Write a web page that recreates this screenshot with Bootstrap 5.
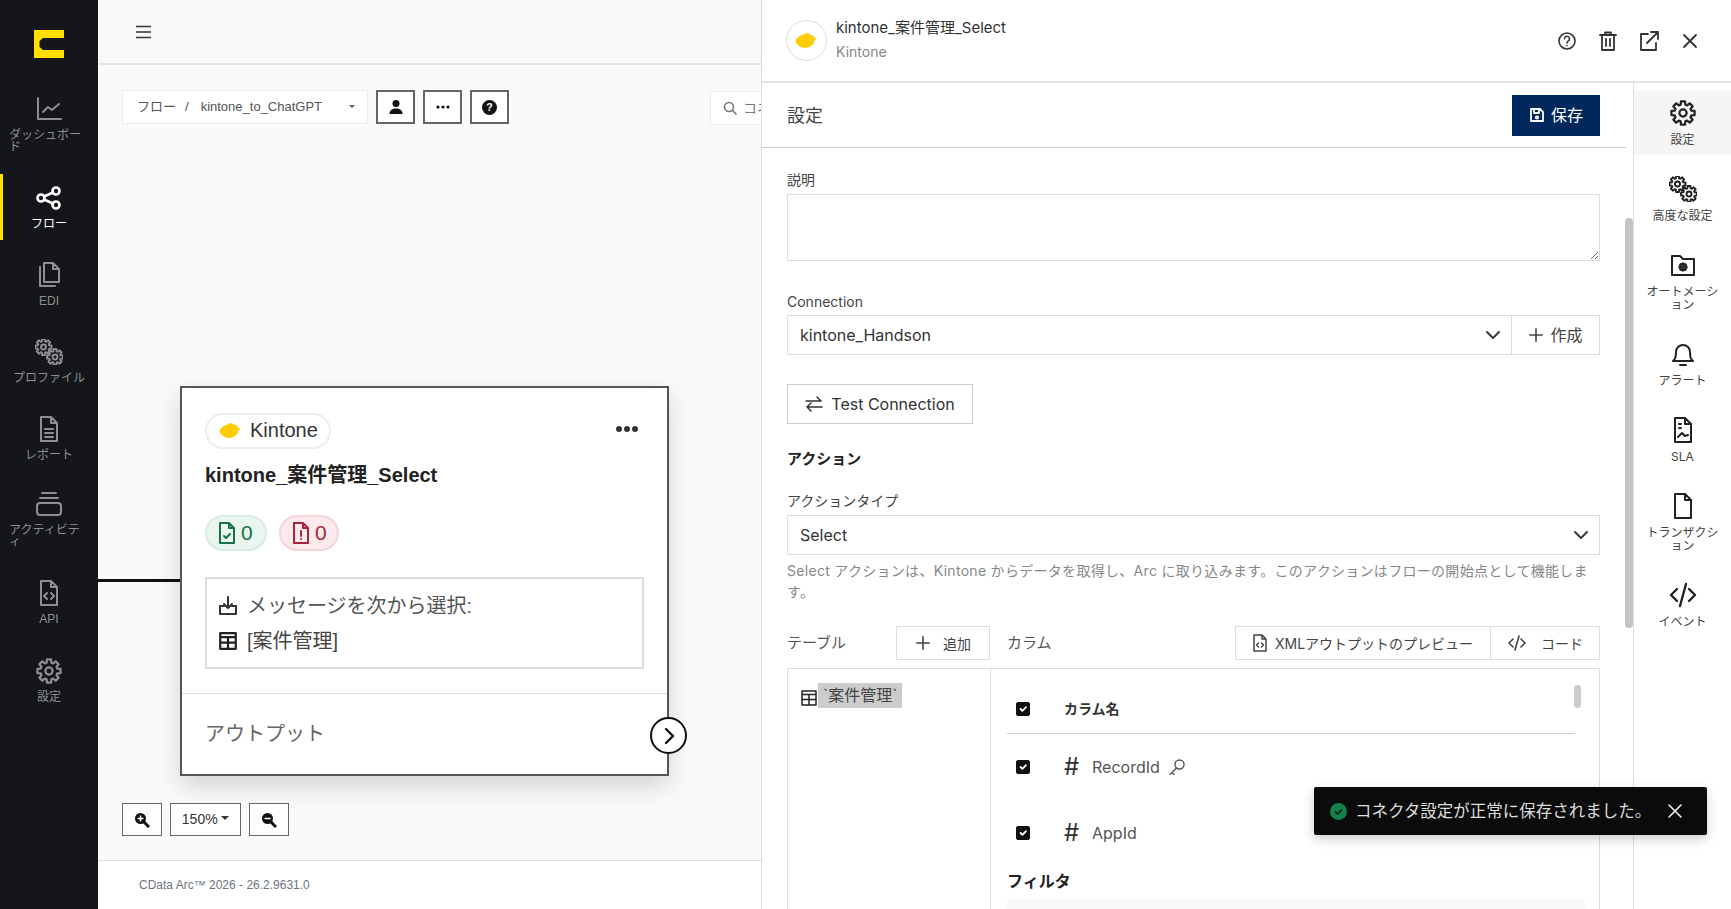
<!DOCTYPE html>
<html lang="ja">
  <head>
    <meta charset="UTF-8" />
    <meta name="viewport" content="width=device-width, initial-scale=1.0" />
    <title>CData Arc - kintone_to_ChatGPT</title>
    <link href="https://cdn.jsdelivr.net/npm/bootstrap@5.3.0/dist/css/bootstrap.min.css" rel="stylesheet" />
    <style>
      html, body { height: 100%; overflow: hidden; }
      body { font-family: "Liberation Sans", "Noto Sans CJK JP", sans-serif; color: #333; background: #fff; }
      .ic { fill: none; stroke: currentColor; stroke-width: 2; stroke-linecap: round; stroke-linejoin: round; }

      /* left rail */
      .rail { width: 98px; background: #14161a; color: #8d8f92; }
      .rail-logo { padding: 30px 0 26px 34px; height: 85px; }
      .rail-item { position: relative; min-height: 66px; padding: 11px 9px 10px; margin-bottom: 11px; font-size: 12px; line-height: 12px; }
      .rail-item svg { width: 28px; height: 26px; margin-bottom: 7px; }
      .rail-item.is-active { color: #fff; }
      .rail-item.is-active::before { content: ""; position: absolute; left: 0; top: 0; bottom: 0; width: 3px; background: #ffe000; }

      /* flow page */
      .topbar { height: 65px; background: #f8f8f7; border-bottom: 2px solid #e4e4e4; padding-left: 38px; }
      .flow-canvas { background: #fafafa; }
      .toolbar { position: absolute; left: 24px; top: 25px; }
      .crumb { width: 246px; height: 34px; background: #fff; border: 1px solid #ececec; font-size: 13px; color: #555; padding: 0 12px 0 14px; }
      .crumb-sep { margin: 0 12px 0 9px; }
      .tool-btn { width: 39px; height: 34px; background: #fff; border: 2px solid #666; border-radius: 0; padding: 0; font-size: 13px; color: #111; }
      .search-box { position: absolute; left: 612px; top: 26px; width: 52px; height: 34px; background: #fff; border: 1px solid #ececec; border-right: 0; font-size: 14px; color: #777; padding-left: 12px; overflow: hidden; white-space: nowrap; }
      .flow-edge { position: absolute; left: 0; top: 514px; width: 84px; height: 3px; background: #111; }
      .node-box { position: absolute; left: 82px; top: 321px; width: 489px; height: 390px; background: #fff; border: 2px solid #555; box-shadow: 0 10px 24px rgba(0, 0, 0, .16); }
      .kin-pill { left: 23px; top: 25px; height: 36px; width: 126px; border: 2px solid #eee; border-radius: 18px; font-size: 20px; color: #333; padding: 0 0 2px 12px; }
      .node-title { font-size: 20px; font-weight: 700; line-height: 24px; color: #222; margin: 0; }
      .count-pill { height: 36px; border-radius: 18px; font-size: 21px; padding: 0 10px 0 11px; gap: 5px; }
      .count-ok { width: 62px; background: #e9f6ef; border: 2px solid #d9ece2; color: #177245; }
      .count-bad { width: 60px; background: #fbe9ec; border: 2px solid #f2d5da; color: #a8243a; }
      .msg-box { border: 2px solid #ddd; height: 92px; font-size: 20px; color: #555; padding: 9px 11px; }
      .msg-box > div { height: 35px; gap: 9px; }
      .node-sep { border-top: 1px solid #ddd; }
      .node-out { font-size: 20px; color: #666; padding-left: 23px; }
      .out-arrow { position: absolute; right: -20px; top: 329px; width: 37px; height: 37px; border: 2px solid #111; border-radius: 50%; background: #fff; }
      .zoom-row { position: absolute; left: 24px; top: 738px; gap: 8px; }
      .zoom-btn { width: 40px; height: 33px; background: #fff; border: 1px solid #666; border-radius: 0; padding: 0; font-size: 14px; color: #333; }
      .zoom-pct { width: 71px; }
      .page-foot { height: 49px; background: #fff; border-top: 1px solid #ddd; font-size: 12px; color: #6c757d; padding-left: 41px; }

      /* settings drawer */
      .drawer { position: absolute; top: 0; right: 0; bottom: 0; width: 970px; background: #fff; border-left: 1px solid #ddd; font-family: Inter, "Noto Sans CJK JP", sans-serif; color: #333; }
      .drawer-head { height: 83px; border-bottom: 2px solid #e4e4e4; padding: 0 30px 0 24px; }
      .drawer-logo { width: 41px; height: 41px; border: 1px solid #ddd; border-radius: 50%; margin-right: 9px; }
      .drawer-name { font-size: 15px; line-height: 20px; color: #333; }
      .drawer-sub { font-size: 14px; line-height: 20px; color: #888; margin-top: 4px; }
      .head-icons { gap: 19px; color: #333; }
      .head-icons svg { width: 22px; height: 22px; }
      .drawer-main { position: relative; flex: 1 1 auto; min-width: 0; overflow: hidden; border-right: 1px solid #ddd; }
      .thumb-outer { position: absolute; right: 0; top: 135px; width: 8px; height: 410px; background: #c4c4c4; border-radius: 4px; }
      .set-head { width: 864px; height: 65px; border-bottom: 1px solid #ccc; padding: 0 26px 0 25px; }
      .set-title { font-size: 18px; color: #444; }
      .save-btn { width: 88px; height: 41px; background: #00285c; color: #fff; border: 1px solid #00285c; border-radius: 0; font-size: 16px; padding: 0; gap: 6px; }
      .form-zone { width: 813px; margin-left: 25px; padding-top: 22px; }
      .fld-label { display: block; font-size: 14px; line-height: 20px; color: #444; }
      .form-zone .form-control, .form-zone .form-select { border-radius: 0; border-color: #ddd; color: #333; font-size: 16px; height: 40px; padding-left: 12px; box-shadow: none; }
      .form-zone .form-select { background-position: right 8px center; background-size: 20px 16px; }
      .form-zone textarea.form-control { height: 67px; }
      .make-btn { width: 89px; border: 1px solid #ddd; border-radius: 0; background: #fff; font-size: 16px; color: #444; padding: 0; gap: 6px; }
      .test-btn { width: 186px; height: 40px; border: 1px solid #ccc; border-radius: 0; background: #fff; color: #333; font-size: 16px; padding: 0; gap: 8px; }
      .sect-title { font-size: 15px; font-weight: 700; line-height: 20px; color: #222; }
      .help-line { font-size: 14px; line-height: 21px; letter-spacing: .3px; color: #888; }
      .plain-btn { height: 34px; border: 1px solid #ddd; border-radius: 0; background: #fff; font-size: 14px; color: #444; padding: 0; }
      .tbl-label { font-size: 15px; color: #555; }
      .pick-box { height: 300px; border: 1px solid #ddd; }
      .pick-left { width: 203px; border-right: 1px solid #ddd; padding: 14px 0 0 12px; font-size: 16px; }
      .tbl-tag { background: #ccc; color: #444; height: 25px; line-height: 25px; padding: 0 5px; }
      .pick-right { position: relative; padding: 0 0 0 16px; }
      .thumb-inner { position: absolute; right: 18px; top: 16px; width: 7px; height: 23px; background: #ccc; border-radius: 4px; }
      .col-row { height: 40px; width: 568px; padding-left: 9px; font-size: 16px; color: #555; }
      .col-row .form-check-input { width: 14px; height: 14px; margin: 0 34px 0 0; border-radius: 2px; background-color: #111; border-color: #111; flex: none; }
      .col-head { margin-top: 15px; height: 50px; border-bottom: 1px solid #ccc; font-weight: 700; font-size: 14px; color: #333; }
      .col-mark { font-size: 24px; width: 28px; color: #333; line-height: 1; }
      .filter-title { font-size: 16px; font-weight: 700; color: #222; line-height: 20px; margin-top: 18px; }
      .filter-bar { width: 578px; height: 20px; background: #f8f8f8; margin-top: 8px; }

      /* right tabs in the drawer */
      .tab-rail { width: 97px; padding-top: 8px; gap: 12px; text-align: center; flex: none; }
      .tab-item { min-height: 64px; padding: 9px 10px; font-size: 12px; line-height: 13px; color: #444; }
      .tab-item svg { display: block; width: 28px; height: 26px; margin: 0 auto 7px; color: #222; }
      .tab-item.is-current { background: #f5f5f5; }

      .saved-toast { position: absolute; left: 552px; top: 787px; width: 393px; height: 48px; background: #0b0b0b; color: #ddd; font-size: 16.500px; padding: 0 24px 0 16px; box-shadow: 0 4px 12px rgba(0, 0, 0, .2); border-radius: 2px; gap: 8px; }
      .saved-dot { width: 17px; height: 17px; }
    </style>
  </head>
  <body class="d-flex">
    <!-- shared icon shapes -->
    <svg class="d-none">
      <defs>
        <g id="cog">
          <polygon points="7.31,-2.09 10.24,-1.81 10.24,1.81 7.31,2.09 6.65,3.68 8.52,5.97 5.97,8.52 3.68,6.65 2.09,7.31 1.81,10.24 -1.81,10.24 -2.09,7.31 -3.68,6.65 -5.97,8.52 -8.52,5.97 -6.65,3.68 -7.31,2.09 -10.24,1.81 -10.24,-1.81 -7.31,-2.09 -6.65,-3.68 -8.52,-5.97 -5.97,-8.52 -3.68,-6.65 -2.09,-7.31 -1.81,-10.24 1.81,-10.24 2.09,-7.31 3.68,-6.65 5.97,-8.52 8.52,-5.97 6.65,-3.68" />
          <circle r="3.2" />
        </g>
        <symbol id="i-gear" viewBox="-11.500 -11.500 23 23"><use href="#cog" /></symbol>
        <symbol id="i-gears" viewBox="0 0 28 26">
          <use href="#cog" transform="translate(8.500 8) scale(.78)" stroke-width="2.500" />
          <use href="#cog" transform="translate(20 18) scale(.78)" stroke-width="2.500" />
        </symbol>
        <symbol id="i-kin" viewBox="0 0 24 16"><path stroke="none" fill="#ffcc00" d="M3 5c2-2 4-3 6-3 1-2 5-2 7 0 2 0 4 2 4 3l3 1-3 2c0 3-1 5-4 6-3 2-7 2-9 1-3-1-5-3-6-5C0 8 1 6 3 5z" /></symbol>
        <symbol id="i-table" viewBox="0 0 18 18"><path d="M2 2h14v14H2zM2 5.500h14M2 10.500h14M9 5.500V16" /></symbol>
        <symbol id="i-plus" viewBox="0 0 18 18"><path d="M9 2v14M2 9h14" /></symbol>
      </defs>
    </svg>

    <!-- Left rail -->
    <aside class="rail flex-shrink-0">
      <div class="rail-logo">
        <svg width="30" height="28" viewBox="0 0 30 28"><path fill="#ffe000" d="M0 0h30v8H9L5.500 11v6l3.500 3h21v8H0z" /></svg>
      </div>
      <div class="rail-item d-flex flex-column align-items-center">
        <svg class="ic" viewBox="0 0 28 26"><path d="M3 2v21h23M8 16l5-5 4 3 7-6" /></svg><span>ダッシュボード</span>
      </div>
      <div class="rail-item is-active d-flex flex-column align-items-center">
        <svg class="ic" viewBox="0 0 28 26" style="stroke-width: 2.600"><circle cx="21" cy="6" r="3.500" /><circle cx="6" cy="13" r="3.500" /><circle cx="21" cy="20" r="3.500" /><path d="M9 11.500l9-4M9 14.500l9 4" /></svg><span>フロー</span>
      </div>
      <div class="rail-item d-flex flex-column align-items-center">
        <svg class="ic" viewBox="0 0 28 26"><path d="M9 1h9l6 6v13H9zM18 1v6h6M5 5v19h15" /></svg><span>EDI</span>
      </div>
      <div class="rail-item d-flex flex-column align-items-center">
        <svg class="ic" viewBox="0 0 28 26"><use href="#i-gears" width="28" height="26" /></svg><span>プロファイル</span>
      </div>
      <div class="rail-item d-flex flex-column align-items-center" style="margin-bottom: 9px">
        <svg class="ic" viewBox="0 0 28 26"><path d="M6 1h10l6 6v18H6zM16 1v6h6M10 13h8M10 17h8M10 21h8" /></svg><span>レポート</span>
      </div>
      <div class="rail-item d-flex flex-column align-items-center">
        <svg class="ic" viewBox="0 0 28 26"><path d="M7 2h14M5 7h18" /><rect x="2" y="12" width="24" height="12" rx="3" /></svg><span>アクティビティ</span>
      </div>
      <div class="rail-item d-flex flex-column align-items-center" style="margin-bottom: 12px">
        <svg class="ic" viewBox="0 0 28 26"><path d="M6 1h10l6 6v18H6zM16 1v6h6M12 13l-3 3 3 3M16 13l3 3-3 3" /></svg><span>API</span>
      </div>
      <div class="rail-item d-flex flex-column align-items-center">
        <svg class="ic" viewBox="0 0 28 26"><use href="#i-gear" width="28" height="26" /></svg><span>設定</span>
      </div>
    </aside>

    <!-- Flow page -->
    <main class="flex-grow-1 d-flex flex-column position-relative" style="min-width: 0">
      <div class="topbar flex-shrink-0 d-flex align-items-center">
        <svg width="15" height="14" viewBox="0 0 15 14" stroke="#333" stroke-width="1.500"><path d="M0 1.500h15M0 7h15M0 12.500h15" /></svg>
      </div>
      <div class="flow-canvas flex-grow-1 position-relative">
        <div class="toolbar d-flex" style="gap: 8px">
          <div class="crumb d-flex align-items-center">
            <span>フロー</span><span class="crumb-sep">/</span><span class="flex-grow-1">kintone_to_ChatGPT</span><span class="dropdown-toggle"></span>
          </div>
          <button class="tool-btn d-flex align-items-center justify-content-center">
            <svg width="16" height="16" viewBox="0 0 16 16" fill="#111"><circle cx="8" cy="4.500" r="3.500" /><path d="M1.500 15c0-4 3-5.500 6.500-5.500s6.500 1.500 6.500 5.500z" /></svg>
          </button>
          <button class="tool-btn d-flex align-items-center justify-content-center">
            <svg width="14" height="4" viewBox="0 0 14 4" fill="#111"><circle cx="2" cy="2" r="1.600" /><circle cx="7" cy="2" r="1.600" /><circle cx="12" cy="2" r="1.600" /></svg>
          </button>
          <button class="tool-btn d-flex align-items-center justify-content-center">
            <svg width="15" height="15" viewBox="0 0 15 15"><circle cx="7.500" cy="7.500" r="7.500" fill="#111" /><text x="7.500" y="11.200" text-anchor="middle" font-size="10.500" font-weight="700" fill="#fff" font-family="Liberation Sans">?</text></svg>
          </button>
        </div>
        <div class="search-box d-flex align-items-center" style="gap: 6px">
          <svg class="ic flex-shrink-0" width="14" height="14" viewBox="0 0 14 14" style="stroke-width: 1.600"><circle cx="6" cy="6" r="4.500" /><path d="M9.500 9.500L13 13" /></svg><span>コネ</span>
        </div>
        <div class="flow-edge"></div>

        <!-- Connector node -->
        <div class="node-box d-flex flex-column">
          <div class="kin-pill position-absolute d-flex align-items-center" style="gap: 8px">
            <svg width="23" height="17"><use href="#i-kin" /></svg><span>Kintone</span>
          </div>
          <svg class="position-absolute" style="left: 433px; top: 37px" width="24" height="8" viewBox="0 0 24 8" fill="#333"><circle cx="4" cy="4" r="3" /><circle cx="12" cy="4" r="3" /><circle cx="20" cy="4" r="3" /></svg>
          <div style="padding: 75px 23px 0">
            <h5 class="node-title">kintone_案件管理_Select</h5>
            <div class="d-flex" style="gap: 12px; margin-top: 28px">
              <div class="count-pill count-ok d-flex align-items-center">
                <svg class="ic" width="18" height="22" viewBox="0 0 18 22"><path d="M2 1h9l5 5v15H2zM11 1v5h5M6 14l2 2 4-4" /></svg><span>0</span>
              </div>
              <div class="count-pill count-bad d-flex align-items-center">
                <svg class="ic" width="18" height="22" viewBox="0 0 18 22"><path d="M2 1h9l5 5v15H2zM11 1v5h5M9 9v5M9 17v.100" /></svg><span>0</span>
              </div>
            </div>
            <div class="msg-box" style="margin-top: 26px">
              <div class="d-flex align-items-center">
                <svg class="ic" width="20" height="20" viewBox="0 0 20 20" style="color: #333"><path d="M10 1v11M6 8l4 4 4-4M6 10H2v8h16v-8h-4" /></svg><span>メッセージを次から選択:</span>
              </div>
              <div class="d-flex align-items-center" style="color: #444">
                <svg class="ic" width="20" height="20" style="color: #222"><use href="#i-table" /></svg><span>[案件管理]</span>
              </div>
            </div>
          </div>
          <div class="node-sep" style="margin-top: 24px"></div>
          <div class="node-out flex-grow-1 d-flex align-items-center">アウトプット</div>
          <div class="out-arrow d-flex align-items-center justify-content-center">
            <svg class="ic" width="12" height="18" viewBox="0 0 12 18" style="stroke-width: 2.400; color: #111"><path d="M3 2l7 7-7 7" /></svg>
          </div>
        </div>

        <div class="zoom-row d-flex">
          <button class="zoom-btn d-flex align-items-center justify-content-center">
            <svg width="16" height="16" viewBox="0 0 16 16"><path d="M10 10l5 5" stroke="#111" stroke-width="3" /><circle cx="6.500" cy="6.500" r="5.500" fill="#111" /><path d="M6.500 3.500v6M3.500 6.500h6" stroke="#fff" stroke-width="1.500" /></svg>
          </button>
          <button class="zoom-btn zoom-pct dropdown-toggle">150%</button>
          <button class="zoom-btn d-flex align-items-center justify-content-center">
            <svg width="16" height="16" viewBox="0 0 16 16"><path d="M10 10l5 5" stroke="#111" stroke-width="3" /><circle cx="6.500" cy="6.500" r="5.500" fill="#111" /><path d="M3.500 6.500h6" stroke="#fff" stroke-width="1.500" /></svg>
          </button>
        </div>
      </div>
      <div class="page-foot flex-shrink-0 d-flex align-items-center">CData Arc™ 2026 - 26.2.9631.0</div>
    </main>

    <!-- Settings drawer -->
    <section class="drawer d-flex flex-column">
      <div class="drawer-head flex-shrink-0 d-flex align-items-center">
        <div class="drawer-logo d-flex align-items-center justify-content-center">
          <svg width="23" height="17"><use href="#i-kin" /></svg>
        </div>
        <div class="flex-grow-1" style="margin-top: -2px">
          <div class="drawer-name">kintone_案件管理_Select</div>
          <div class="drawer-sub">Kintone</div>
        </div>
        <div class="head-icons d-flex align-items-center">
          <svg class="ic" viewBox="0 0 22 22" style="stroke-width: 1.600"><circle cx="11" cy="11" r="8" /><path d="M8.500 8.800a2.500 2.500 0 1 1 3.800 2.100c-.9.600-1.300 1-1.300 2M11 15.500v.100" /></svg>
          <svg class="ic" viewBox="0 0 22 22" style="stroke-width: 1.800"><path d="M3 5h16M8 5V2.500h6V5M5 5v15h12V5M9 9v7M13 9v7" /></svg>
          <svg class="ic" viewBox="0 0 22 22" style="stroke-width: 1.800"><path d="M10 4H3v16h15v-7M13 2h7v7M20 2L9 13" /></svg>
          <svg class="ic" viewBox="0 0 22 22" style="stroke-width: 1.800"><path d="M5 5l12 12M17 5L5 17" /></svg>
        </div>
      </div>

      <div class="d-flex flex-grow-1" style="min-height: 0">
        <div class="drawer-main">
          <div class="thumb-outer"></div>
          <div class="set-head d-flex align-items-center justify-content-between">
            <span class="set-title">設定</span>
            <button class="save-btn d-flex align-items-center justify-content-center">
              <svg width="16" height="16" viewBox="0 0 16 16" class="ic" style="stroke-width: 1.800"><path d="M2 2h9l3 3v9H2zM5 2v4h5V2" /><circle cx="8" cy="10.500" r="1.200" /></svg><span>保存</span>
            </button>
          </div>
          <div class="form-zone">
            <label class="fld-label" style="margin-bottom: 4px">説明</label>
            <textarea class="form-control"></textarea>

            <label class="fld-label" style="margin-top: 31px; margin-bottom: 3px">Connection</label>
            <div class="input-group">
              <select class="form-select"><option>kintone_Handson</option></select>
              <button class="make-btn d-flex align-items-center justify-content-center">
                <svg class="ic" width="16" height="16" style="stroke-width: 1.800"><use href="#i-plus" width="16" height="16" /></svg><span>作成</span>
              </button>
            </div>

            <button class="test-btn d-flex align-items-center justify-content-center" style="margin-top: 29px">
              <svg class="ic" width="18" height="18" viewBox="0 0 18 18" style="stroke-width: 1.500"><path d="M1 6h15M12 2l4 4M17 12H2M6 8l-4 4 4 4" /></svg><span>Test Connection</span>
            </button>

            <div class="sect-title" style="margin-top: 25px">アクション</div>

            <label class="fld-label" style="margin-top: 22px; margin-bottom: 4px">アクションタイプ</label>
            <select class="form-select"><option>Select</option></select>
            <div class="help-line" style="margin-top: 5px">Select アクションは、Kintone からデータを取得し、Arc に取り込みます。このアクションはフローの開始点として機能します。</div>

            <div class="d-flex align-items-center" style="margin-top: 24px; margin-bottom: 8px">
              <span class="tbl-label" style="width: 109px">テーブル</span>
              <button class="plain-btn d-flex align-items-center justify-content-center" style="width: 94px; gap: 12px">
                <svg class="ic" width="16" height="16" style="stroke-width: 1.800"><use href="#i-plus" width="16" height="16" /></svg><span>追加</span>
              </button>
              <span class="tbl-label flex-grow-1" style="padding-left: 17px">カラム</span>
              <button class="plain-btn d-flex align-items-center justify-content-center" style="width: 256px; gap: 8px">
                <svg class="ic" width="14" height="18" viewBox="0 0 14 18" style="stroke-width: 1.500"><path d="M1 1h8l4 4v12H1zM9 1v4h4M5.500 9l-2 2 2 2M8.500 9l2 2-2 2" /></svg><span>XMLアウトプットのプレビュー</span>
              </button>
              <button class="plain-btn d-flex align-items-center justify-content-center" style="width: 109px; gap: 14px; border-left: 0">
                <svg class="ic" width="20" height="16" viewBox="0 0 20 16" style="stroke-width: 1.600"><path d="M6 4l-4 4 4 4M14 4l4 4-4 4M12 1L8 15" /></svg><span>コード</span>
              </button>
            </div>

            <div class="pick-box d-flex">
              <div class="pick-left d-flex align-items-start">
                <svg class="ic" width="18" height="18" style="stroke-width: 1.500; color: #222; flex: none; margin-top: 6px"><use href="#i-table" /></svg>
                <span class="tbl-tag">`案件管理`</span>
              </div>
              <div class="pick-right flex-grow-1">
                <div class="thumb-inner"></div>
                <div class="col-row col-head d-flex align-items-center">
                  <input class="form-check-input" type="checkbox" checked /><span>カラム名</span>
                </div>
                <div class="col-row d-flex align-items-center" style="margin-top: 13px">
                  <input class="form-check-input" type="checkbox" checked />
                  <span class="col-mark">#</span><span>RecordId</span>
                  <svg class="ic ms-2" width="18" height="18" viewBox="0 0 18 18" style="stroke-width: 1.400"><circle cx="11.500" cy="6.500" r="4.500" /><path d="M8.500 10L2 16.500M4 14.500l2 2" /></svg>
                </div>
                <div class="col-row d-flex align-items-center" style="margin-top: 26px">
                  <input class="form-check-input" type="checkbox" checked />
                  <span class="col-mark">#</span><span>AppId</span>
                </div>
                <div class="filter-title">フィルタ</div>
                <div class="filter-bar"></div>
              </div>
            </div>
          </div>
        </div>

        <nav class="tab-rail d-flex flex-column">
          <div class="tab-item is-current"><svg class="ic"><use href="#i-gear" width="28" height="26" /></svg>設定</div>
          <div class="tab-item"><svg class="ic"><use href="#i-gears" width="28" height="26" /></svg>高度な設定</div>
          <div class="tab-item"><svg class="ic" viewBox="0 0 28 26"><path d="M3 4h8l3 3h11v16H3z" /><use href="#cog" transform="translate(14 15) scale(.36)" stroke-width="5" /></svg>オートメーション</div>
          <div class="tab-item"><svg class="ic" viewBox="0 0 28 26"><path d="M4 20c2-2 3-3 3-9a7 7 0 0 1 14 0c0 6 1 7 3 9zM11 24h6" /></svg>アラート</div>
          <div class="tab-item"><svg class="ic" viewBox="0 0 28 26"><path d="M6 1h10l6 6v18H6zM16 1v6h6M10 7h2M10 11h2M9 20l4-4 3 3 3-1" /></svg>SLA</div>
          <div class="tab-item"><svg class="ic" viewBox="0 0 28 26"><path d="M6 1h10l6 6v18H6zM16 1v6h6" /></svg>トランザクション</div>
          <div class="tab-item"><svg class="ic" viewBox="0 0 28 26" style="stroke-width: 2.400"><path d="M8 7l-6 6 6 6M20 7l6 6-6 6M17 2l-6 22" /></svg>イベント</div>
        </nav>
      </div>

      <div class="saved-toast d-flex align-items-center">
        <svg class="saved-dot flex-shrink-0" viewBox="0 0 17 17"><circle cx="8.500" cy="8.500" r="8.500" fill="#14804a" /><path d="M5 8.500l2.500 2.500 4.500-4.500" fill="none" stroke="#0b0b0b" stroke-width="1.500" /></svg>
        <span class="flex-grow-1">コネクタ設定が正常に保存されました。</span>
        <svg class="ic" width="16" height="16" viewBox="0 0 16 16" style="stroke-width: 1.600; color: #eee"><path d="M2 2l12 12M14 2L2 14" /></svg>
      </div>
    </section>

    <script src="https://cdn.jsdelivr.net/npm/bootstrap@5.3.0/dist/js/bootstrap.bundle.min.js"></script>
  </body>
</html>
